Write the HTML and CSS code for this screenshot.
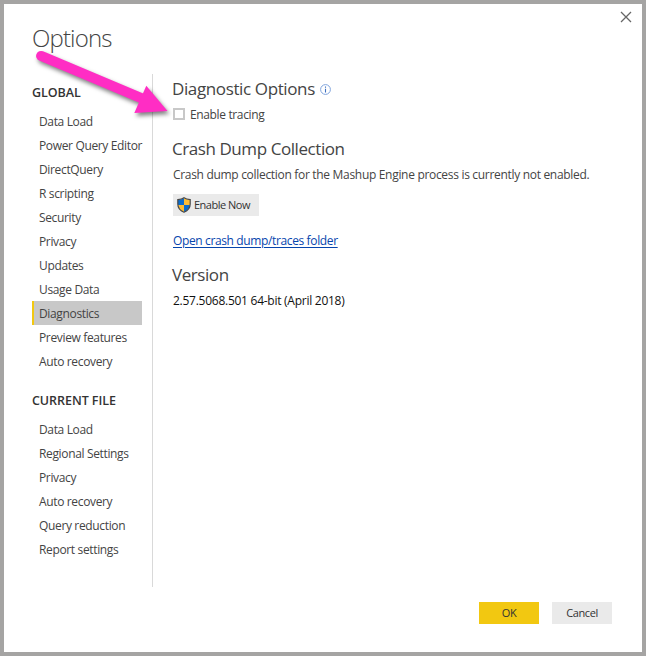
FILE: index.html
```html
<!DOCTYPE html>
<html lang="en">
<head>
<meta charset="utf-8">
<title>Options</title>
<link rel="stylesheet" href="styles.css">
</head>
<body>
<div class="dialog">
  <button class="close" aria-label="Close"><svg width="12" height="12" viewBox="0 0 12 12"><path d="M1 1L11 11M11 1L1 11" stroke="#666" stroke-width="1.3" fill="none"/></svg></button>
  <h1><span>Options</span></h1>
  <div class="body">
    <nav>
      <h3>GLOBAL</h3>
      <ul>
        <li>Data Load</li>
        <li>Power Query Editor</li>
        <li>DirectQuery</li>
        <li>R scripting</li>
        <li>Security</li>
        <li>Privacy</li>
        <li>Updates</li>
        <li>Usage Data</li>
        <li class="selected">Diagnostics</li>
        <li>Preview features</li>
        <li>Auto recovery</li>
      </ul>
      <h3 class="current">CURRENT FILE</h3>
      <ul>
        <li>Data Load</li>
        <li>Regional Settings</li>
        <li>Privacy</li>
        <li>Auto recovery</li>
        <li>Query reduction</li>
        <li>Report settings</li>
      </ul>
    </nav>
    <main>
      <h2 class="diag"><span>Diagnostic Options</span>
        <svg width="11" height="11" viewBox="0 0 11 11"><circle cx="5.5" cy="5.5" r="4.9" fill="#fff" stroke="#7fa3dc" stroke-width="1"/><path d="M5.500 2.600v1.200M5.500 4.700v3.700" stroke="#3c6fc0" stroke-width="1.1"/></svg>
      </h2>
      <label class="check"><i class="box"></i><span>Enable tracing</span></label>
      <h2 class="crash"><span>Crash Dump Collection</span></h2>
      <p class="desc"><span>Crash dump collection for the Mashup Engine process is currently not enabled.</span></p>
      <button class="enable">
        <svg width="14" height="16" viewBox="0 0 14 16">
          <defs><clipPath id="shield"><path d="M7 1C5.500 2 3.500 2.600 1 2.700V7C1 11 3.500 13.600 7 15C10.500 13.600 13 11 13 7V2.700C10.500 2.600 8.500 2 7 1Z"/></clipPath></defs>
          <g clip-path="url(#shield)"><path fill="#0b6ccc" d="M0 0h7v8H0zM7 8h7v8H7z"/><path fill="#fdbc35" d="M7 0h7v8H7zM0 8h7v8H0z"/></g>
          <path d="M7 .8C5.500 1.900 3.500 2.500 .8 2.600V7C.8 11 3.500 13.800 7 15.200C10.500 13.800 13.200 11 13.200 7V2.600C10.500 2.500 8.500 1.900 7 .8Z" fill="none" stroke="#484848" stroke-width="1.200"/>
        </svg>
        <span>Enable Now</span>
      </button>
      <a class="link" href="#"><span>Open crash dump/traces folder</span></a>
      <h2 class="version"><span>Version</span></h2>
      <p class="number"><span>2.57.5068.501 64-bit (April 2018)</span></p>
    </main>
  </div>
  <footer><button class="ok">OK</button><button class="cancel">Cancel</button></footer>
  <svg class="arrow" width="160" height="90" viewBox="0 0 160 90"><path d="M17.100 11.900L118.500 54.700" stroke="#ff2dc4" stroke-width="10" stroke-linecap="round"/><path d="M122.300 41.700L143.500 67L110.300 69Z" fill="#ff2dc4"/></svg>
</div>
</body>
</html>
```
FILE: styles.css
```css
* { box-sizing: border-box; }
body {
  margin: 0;
  font: 12px/16px "Open Sans", "Noto Sans", sans-serif;
  color: #444;
}
h1, h2, h3, p, ul { margin: 0; padding: 0; font-weight: 400; }
ul { list-style: none; }
button { border: 0; padding: 0; font: inherit; color: #333; }
.dialog {
  position: relative;
  width: 646px;
  height: 656px;
  border: 4px solid #a5a4a3;
  background: #fff;
  padding: 16px 30px 28px 28px;
  display: flex;
  flex-direction: column;
}
.close { position: absolute; right: 10px; top: 7px; width: 12px; height: 12px; background: none; }
.close svg { display: block; }
h1 {
  height: 54px;
  font: 300 24px/36px "Open Sans", sans-serif;
  letter-spacing: -0.85px;
}
.body { display: flex; height: 513px; }
nav { width: 121px; border-right: 1px solid #d9d9d9; padding-top: 10px; }
h3 { height: 25px; font-size: 12.5px; font-weight: 600; line-height: 17px; color: #333; letter-spacing: -0.05px; }
.current { height: 25px; margin-top: 19px; }
li {
  width: 110px;
  height: 24px;
  padding-left: 7px;
  line-height: 25px;
  letter-spacing: -0.35px;
  white-space: nowrap;
}
.selected { background: #c8c8c8; border-left: 2px solid #f2c811; padding-left: 5px; }
main {
  flex: 1;
  padding-left: 20px;
  display: flex;
  flex-direction: column;
  align-items: flex-start;
  letter-spacing: -0.31px;
  white-space: nowrap;
}
h2 { font-size: 17px; line-height: 24px; letter-spacing: -0.43px; margin-left: -1px; }
.diag { display: flex; align-items: center; gap: 5px; margin-top: 3px; letter-spacing: -0.38px; }
.check { display: flex; align-items: center; gap: 5px; margin-top: 6px; height: 16px; letter-spacing: -0.36px; }
.box { width: 12px; height: 12px; margin-bottom: 2px; border: 2px solid #c8c8c8; }
.crash { margin-top: 14px; }
.desc { margin-top: 6px; }
.enable {
  display: flex;
  align-items: center;
  gap: 3px;
  width: 86px;
  height: 22px;
  margin-top: 11px;
  padding-left: 4px;
  background: #eaeaea;
  font-size: 11px;
  letter-spacing: -0.5px;
}
.link { margin-top: 17px; color: #0645ad; letter-spacing: -0.37px; text-underline-offset: 2px; }
.version { margin-top: 14px; }
.number { margin-top: 6px; color: #111; letter-spacing: -0.26px; }
footer { display: flex; justify-content: flex-end; gap: 13px; margin-top: 15px; }
footer button { width: 60px; height: 22px; font-size: 11px; line-height: 22px; letter-spacing: -0.4px; background: #eaeaea; }
footer .ok { background: #f2c811; }
.arrow {
  position: absolute;
  left: 20px;
  top: 40px;
  filter: drop-shadow(2px 3px 2px rgba(0, 0, 0, 0.5));
}
```
